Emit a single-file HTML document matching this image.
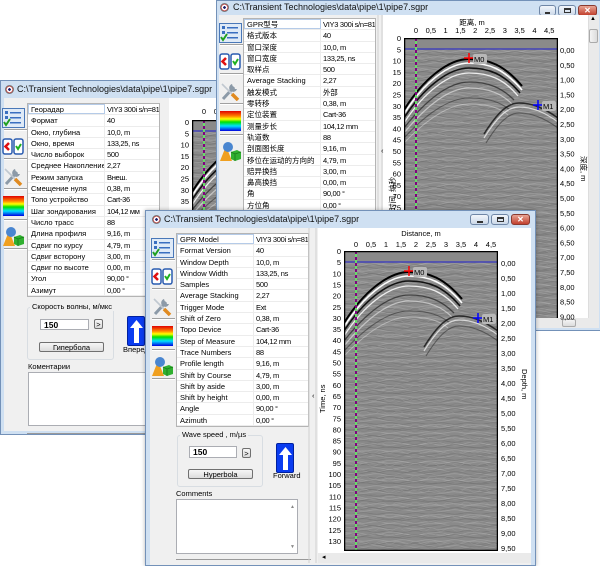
<!DOCTYPE html>
<html><head><meta charset="utf-8">
<style>
*{margin:0;padding:0;box-sizing:border-box}
body{width:600px;height:564px;background:#fff;position:relative;overflow:hidden;font-family:"Liberation Sans","Noto Sans CJK SC",sans-serif;font-size:7.5px;color:#000}
.win{position:absolute;background:#cfe0f2;border:1px solid #7391b8;overflow:hidden}
.cl{position:absolute;background:#f0f0f0}
.wh{position:absolute;background:#fff}
.tt{position:absolute;font-size:9px;white-space:nowrap;color:#111}
.dot{position:absolute;width:9px;height:9px;border-radius:50%;background:radial-gradient(circle,#1a1a6a 0 25%,#fff 30% 55%,#d04040 60%);border:1px solid #777}
.cb{position:absolute;height:11px;border:1px solid #6f86a6;border-radius:3px;background:linear-gradient(#f2f6fb,#cbd8e8)}
.cx{background:linear-gradient(#e8a494,#c2402e);border-color:#8a3a30;color:#fff;font-size:8px;font-weight:bold;text-align:center;line-height:9px}
.tbl{position:absolute;background:#fff;border:1px solid #b4b4b4;width:133px}
.r{height:11.3px;line-height:11px;border-bottom:1px solid #ececec;display:flex;white-space:nowrap;overflow:hidden;font-size:7.5px}
.r span{display:block;padding-left:3px}
.r span:first-child{width:77px;border-right:1px solid #ececec;flex:none;overflow:hidden}
.r span:last-child{letter-spacing:-0.3px;padding-left:2px}
.r.sel span:first-child{outline:1px solid #b5cbe8;outline-offset:-1px}
.ic{position:absolute}
.sep{position:absolute;height:2px;border-top:1px solid #a0a0a0;border-bottom:1px solid #fff}
.gb{position:absolute;border:1px solid #d8dde2;border-radius:3px}
.gl{position:absolute;background:#f0f0f0;padding:0 2px;white-space:nowrap;font-size:7.5px}
.inp{position:absolute;background:#fff;border:1px solid #abadb3;font-weight:bold;font-size:8.5px;padding-left:3px;line-height:11px}
.btn{position:absolute;border:1px solid #707070;border-radius:2px;background:linear-gradient(#f6f6f6,#dcdcdc);text-align:center;font-size:7.5px;line-height:9px}
.fw{position:absolute;background:#0a3cf0;border-radius:2px;border:1px solid #0020a0}
.lab{position:absolute;font-size:7.5px;white-space:nowrap}
.ta{position:absolute;background:#fff;border:1px solid #abadb3}
.sv{position:absolute;left:0;top:0}
svg text{font-family:"Liberation Sans","Noto Sans CJK SC",sans-serif;font-size:7.5px}
</style></head><body>

<svg width="0" height="0" style="position:absolute">
<defs>
<linearGradient id="rb" x1="0" y1="0" x2="0" y2="1">
<stop offset="0" stop-color="#e00000"/><stop offset=".25" stop-color="#ff8000"/><stop offset=".4" stop-color="#ffff00"/><stop offset=".55" stop-color="#00e000"/><stop offset=".75" stop-color="#00e0ff"/><stop offset="1" stop-color="#0000e0"/></linearGradient>
<pattern id="tx" width="26" height="6" patternUnits="userSpaceOnUse">
<path d="M0,1.5 Q6.5,0 13,1.5 T26,1.5" stroke="#a6a6a6" stroke-width=".8" fill="none"/>
<path d="M0,4.5 Q6.5,6 13,4.5 T26,4.5" stroke="#747474" stroke-width=".8" fill="none"/>
</pattern>
<pattern id="tx2" width="41" height="9" patternUnits="userSpaceOnUse">
<path d="M0,3 Q10,1 20,4 T41,3" stroke="#b0b0b0" stroke-width=".7" fill="none"/>
<path d="M0,7 Q10,9 20,6 T41,7" stroke="#6a6a6a" stroke-width=".7" fill="none"/>
</pattern>
<pattern id="tx3" width="17" height="13" patternUnits="userSpaceOnUse">
<path d="M0,5 Q4,3 8,6 T17,5" stroke="#9e9e9e" stroke-width=".7" fill="none"/>
<path d="M0,11 Q4,12 8,10 T17,11" stroke="#7a7a7a" stroke-width=".7" fill="none"/>
</pattern>
<g id="plot">
<rect width="154" height="300" fill="#8a8a8a"/>
<rect y="11" width="154" height="289" fill="url(#tx)" opacity=".8"/>
<rect y="11" width="154" height="289" fill="url(#tx2)" opacity=".5"/>
<rect y="11" width="154" height="289" fill="url(#tx3)" opacity=".5"/>
<g fill="none">
<path d="M0,72 C20,40 45,21 65,21 C85,21 100,27 118,48" stroke="#000" stroke-width="2"/>
<path d="M0,76 C20,44 45,25 65,25 C85,25 100,31 118,52" stroke="#fff" stroke-width="1.6"/>
<path d="M0,80 C20,49 45,30 65,30 C85,30 100,36 116,55" stroke="#111" stroke-width="1.6"/>
<path d="M0,85 C20,54 45,35 65,35 C85,35 100,41 114,58" stroke="#eee" stroke-width="1.3"/>
<path d="M0,90 C22,62 45,44 65,44 C85,44 98,50 110,62" stroke="#222" stroke-width="1.3" opacity=".7"/>
<path d="M0,95 C22,68 45,50 65,50 C85,50 98,56 108,66" stroke="#ddd" stroke-width="1.2" opacity=".7"/>
<path d="M0,100 C22,76 45,60 65,60 C85,60 96,64 106,72" stroke="#222" stroke-width="1.1" opacity=".5"/>
<path d="M0,105 C22,82 45,66 65,66 C85,66 96,70 104,77" stroke="#ddd" stroke-width="1" opacity=".5"/>
<path d="M80,96 C95,72 105,65 115,65 C128,65 140,70 154,80" stroke="#111" stroke-width="1.5" opacity=".8"/>
<path d="M80,100 C95,76 105,69 115,69 C128,69 140,74 154,84" stroke="#eee" stroke-width="1.2" opacity=".8"/>
<path d="M82,105 C96,82 106,75 115,75 C128,75 140,80 154,90" stroke="#222" stroke-width="1.1" opacity=".5"/>
</g>
<line x1="0" y1="11" x2="154" y2="11" stroke="#3434c0" stroke-width="1.2"/>
<line x1="12" y1="0" x2="12" y2="300" stroke="#66e066" stroke-width="2"/>
<line x1="12" y1="0" x2="12" y2="300" stroke="#800080" stroke-width="2" stroke-dasharray="3 3"/>
<rect x="0.5" y="0.5" width="153" height="299" fill="none" stroke="#000" stroke-width="1.5"/>
<path d="M60,20 h10 M65,15 v10" stroke="#f00" stroke-width="1.5"/>
<rect x="69" y="16" width="14" height="10" rx="2" fill="#b8b8b8"/>
<text x="70" y="24">M0</text>
<path d="M129,67 h10 M134,62 v10" stroke="#00f" stroke-width="1.5"/>
<rect x="138" y="63" width="14" height="10" rx="2" fill="#b8b8b8"/>
<text x="139" y="71">M1</text>
</g>
<g id="i1"><rect x=".5" y=".5" width="22" height="19" fill="#dfeaf7" stroke="#4a78b8"/><rect x="3" y="3" width="3" height="3" fill="#3a6fc0"/><rect x="8" y="4" width="11" height="1.5" fill="#3a6fc0"/><rect x="3" y="8" width="3" height="3" fill="#3a6fc0"/><rect x="8" y="9" width="11" height="1.5" fill="#3a6fc0"/><rect x="8" y="14" width="11" height="1.5" fill="#3a6fc0"/><path d="M2,14 L4,17 L8,11" stroke="#20a020" stroke-width="2" fill="none"/></g>
<g id="i2"><rect x="1" y="2" width="9" height="15" rx="2" fill="#fff" stroke="#2a5cb0" stroke-width="1.5"/><path d="M7,6 L3.5,9.5 L7,13" stroke="#e01010" stroke-width="2.5" fill="none"/><rect x="12" y="2" width="9" height="15" rx="2" fill="#fff" stroke="#2a5cb0" stroke-width="1.5"/><path d="M14,9 L16,12 L19,7" stroke="#20b020" stroke-width="2" fill="none"/></g>
<g id="i3"><path d="M4,18 L15,6" stroke="#8c9aa8" stroke-width="3"/><path d="M13,3 a4,4 0 1 0 5,5 l-2,0 -2,-2 z" fill="#8c9aa8"/><path d="M3,3 L13,13" stroke="#c0c8d0" stroke-width="1.6"/><path d="M13,13 L19,19" stroke="#e08a20" stroke-width="3.5"/></g>
<g id="i4"><rect x="1" y="0" width="21" height="20" fill="url(#rb)"/></g>
<g id="i5"><path d="M1,20 L7,5 L13,20 Z" fill="#f0a020"/><circle cx="9" cy="6" r="5" fill="#4a86d0"/><path d="M12,11 L18,9 L22,11 L22,18 L16,20 L12,18 Z" fill="#30b030"/><path d="M12,11 L16,13 L22,11 M16,13 V20" stroke="#1a7a1a" fill="none" stroke-width=".8"/></g>
<g id="fwa"><path d="M8.5,3 L2,11 L6,11 L6,26 L11,26 L11,11 L15,11 Z" fill="#fff"/></g>
</defs></svg>

<!-- ============ WINDOW 1 (Russian) ============ -->
<div class="win" style="left:0;top:80px;width:232px;height:355px">
<div class="dot" style="left:4px;top:4px"></div>
<div class="tt" style="left:16px;top:3px">C:\Transient Technologies\data\pipe\1\pipe7.sgpr</div>
<div class="cl" style="left:3px;top:17px;width:240px;height:333px"></div>
<div class="wh" style="left:168px;top:17px;width:70px;height:333px"></div>
<svg class="ic" style="left:1px;top:27px" width="24" height="20"><use href="#i1"/></svg>
<div class="sep" style="left:3px;top:48px;width:23px"></div>
<svg class="ic" style="left:1px;top:56px" width="24" height="20"><use href="#i2"/></svg>
<div class="sep" style="left:3px;top:77px;width:23px"></div>
<svg class="ic" style="left:1px;top:85px" width="24" height="20"><use href="#i3"/></svg>
<div class="sep" style="left:3px;top:107px;width:23px"></div>
<svg class="ic" style="left:1px;top:115px" width="24" height="20"><use href="#i4"/></svg>
<div class="sep" style="left:3px;top:138px;width:23px"></div>
<svg class="ic" style="left:1px;top:145px" width="24" height="20"><use href="#i5"/></svg>
<div class="sep" style="left:3px;top:167px;width:23px"></div>
<div class="tbl" style="left:26px;top:22px">
<div class="r sel"><span>Георадар</span><span>VIY3 300i s/n=81</span></div>
<div class="r"><span>Формат</span><span>40</span></div>
<div class="r"><span>Окно, глубина</span><span>10,0, m</span></div>
<div class="r"><span>Окно, время</span><span>133,25, ns</span></div>
<div class="r"><span>Число выборок</span><span>500</span></div>
<div class="r"><span>Среднее Накопление</span><span>2,27</span></div>
<div class="r"><span>Режим запуска</span><span>Внеш.</span></div>
<div class="r"><span>Смещение нуля</span><span>0,38, m</span></div>
<div class="r"><span>Топо устройство</span><span>Cart-36</span></div>
<div class="r"><span>Шаг зондирования</span><span>104,12 мм</span></div>
<div class="r"><span>Число трасс</span><span>88</span></div>
<div class="r"><span>Длина профиля</span><span>9,16, m</span></div>
<div class="r"><span>Сдвиг по курсу</span><span>4,79, m</span></div>
<div class="r"><span>Сдвиг всторону</span><span>3,00, m</span></div>
<div class="r"><span>Сдвиг по высоте</span><span>0,00, m</span></div>
<div class="r"><span>Угол</span><span>90,00 °</span></div>
<div class="r"><span>Азимут</span><span>0,00 °</span></div>
</div>
<div class="gb" style="left:26px;top:226px;width:87px;height:53px"></div>
<div class="gl" style="left:29px;top:221px">Скорость волны, м/мкс</div>
<div class="inp" style="left:39px;top:238px;width:49px;height:11px">150</div>
<div class="btn" style="left:93px;top:238px;width:9px;height:10px">&gt;</div>
<div class="btn" style="left:38px;top:261px;width:65px;height:10px">Гипербола</div>
<div class="fw" style="left:126px;top:235px;width:18px;height:30px"><svg width="18" height="30"><use href="#fwa"/></svg></div>
<div class="lab" style="left:122px;top:264px">Вперед</div>
<div class="lab" style="left:27px;top:281px">Коментарии</div>
<div class="ta" style="left:27px;top:291px;width:121px;height:54px"></div>
<div style="position:absolute;left:26px;top:352px;width:130px;border-top:1px solid #999"></div>
<svg class="sv" width="232" height="355">
<svg x="191" y="39" width="154" height="250"><use href="#plot"/></svg>
<g text-anchor="end">
<text x="188" y="44">0</text><text x="188" y="55.3">5</text><text x="188" y="66.6">10</text><text x="188" y="77.9">15</text><text x="188" y="89.2">20</text><text x="188" y="100.5">25</text><text x="188" y="111.8">30</text><text x="188" y="123.1">35</text><text x="188" y="134.4">40</text>
</g>
<g text-anchor="middle"><text x="203" y="33">0</text><text x="218" y="33">0,5</text></g>
</svg>
</div>

<!-- ============ WINDOW 3 (Chinese) ============ -->
<div class="win" style="left:216px;top:0;width:385px;height:331px">
<div class="dot" style="left:3px;top:2px"></div>
<div class="tt" style="left:16px;top:1px">C:\Transient Technologies\data\pipe\1\pipe7.sgpr</div>
<div class="cb" style="left:322px;top:4px;width:17px"><div style="margin:6px 5px 0;height:2px;background:#333;width:5px"></div></div>
<div class="cb" style="left:341px;top:4px;width:18px"><div style="margin:2px 5px 0;height:5px;border:1px solid #333;border-top-width:2px;width:7px"></div></div>
<div class="cb cx" style="left:361px;top:4px;width:19px">✕</div>
<div class="cl" style="left:2px;top:14px;width:380px;height:313px"></div>
<div class="wh" style="left:166px;top:14px;width:205px;height:303px"></div>
<div style="position:absolute;left:371px;top:14px;width:11px;height:303px;background:#eaeaea;border-left:1px solid #ddd"></div>
<div style="position:absolute;left:372px;top:28px;width:9px;height:14px;background:linear-gradient(90deg,#f4f4f4,#dcdcdc);border:1px solid #aaa;border-radius:2px"></div>
<div class="lab" style="left:373px;top:15px;font-size:6px">▲</div>
<div style="position:absolute;left:166px;top:317px;width:216px;height:10px;background:#eaeaea"></div>
<div style="position:absolute;left:345px;top:318px;width:14px;height:8px;background:linear-gradient(#f4f4f4,#dcdcdc);border:1px solid #aaa;border-radius:2px"></div>
<svg class="ic" style="left:2px;top:22px" width="24" height="20"><use href="#i1"/></svg>
<div class="sep" style="left:3px;top:43px;width:23px"></div>
<svg class="ic" style="left:2px;top:51px" width="24" height="20"><use href="#i2"/></svg>
<div class="sep" style="left:3px;top:72px;width:23px"></div>
<svg class="ic" style="left:2px;top:80px" width="24" height="20"><use href="#i3"/></svg>
<div class="sep" style="left:3px;top:102px;width:23px"></div>
<svg class="ic" style="left:2px;top:110px" width="24" height="20"><use href="#i4"/></svg>
<div class="sep" style="left:3px;top:133px;width:23px"></div>
<svg class="ic" style="left:2px;top:140px" width="24" height="20"><use href="#i5"/></svg>
<div class="tbl" style="left:26px;top:17px">
<div class="r sel"><span>GPR型号</span><span>VIY3 300i s/n=81</span></div>
<div class="r"><span>格式版本</span><span>40</span></div>
<div class="r"><span>窗口深度</span><span>10,0, m</span></div>
<div class="r"><span>窗口宽度</span><span>133,25, ns</span></div>
<div class="r"><span>取样点</span><span>500</span></div>
<div class="r"><span>Average Stacking</span><span>2,27</span></div>
<div class="r"><span>触发模式</span><span>外部</span></div>
<div class="r"><span>零转移</span><span>0,38, m</span></div>
<div class="r"><span>定位装置</span><span>Cart-36</span></div>
<div class="r"><span>测量步长</span><span>104,12 mm</span></div>
<div class="r"><span>轨道数</span><span>88</span></div>
<div class="r"><span>剖面图长度</span><span>9,16, m</span></div>
<div class="r"><span>移位在运动的方向的</span><span>4,79, m</span></div>
<div class="r"><span>赔异换挡</span><span>3,00, m</span></div>
<div class="r"><span>鼻高换挡</span><span>0,00, m</span></div>
<div class="r"><span>角</span><span>90,00 °</span></div>
<div class="r"><span>方位角</span><span>0,00 °</span></div>
</div>
<svg class="sv" width="385" height="331">
<line x1="161" y1="14" x2="161" y2="317" stroke="#cfcfcf"/><line x1="165" y1="14" x2="165" y2="317" stroke="#cfcfcf"/>
<svg x="187" y="37" width="154" height="280"><use href="#plot"/></svg>
<text x="255" y="24" text-anchor="middle">距离, m</text>
<g text-anchor="middle">
<text x="199" y="32">0</text><text x="213.8" y="32">0,5</text><text x="228.6" y="32">1</text><text x="243.4" y="32">1,5</text><text x="258.2" y="32">2</text><text x="273" y="32">2,5</text><text x="287.8" y="32">3</text><text x="302.6" y="32">3,5</text><text x="317.4" y="32">4</text><text x="332.2" y="32">4,5</text>
</g>
<g text-anchor="end">
<text x="184" y="40">0</text><text x="184" y="51.3">5</text><text x="184" y="62.6">10</text><text x="184" y="73.9">15</text><text x="184" y="85.2">20</text><text x="184" y="96.5">25</text><text x="184" y="107.8">30</text><text x="184" y="119.1">35</text><text x="184" y="130.4">40</text><text x="184" y="141.7">45</text><text x="184" y="153">50</text><text x="184" y="164.3">55</text><text x="184" y="175.6">60</text><text x="184" y="186.9">65</text><text x="184" y="198.2">70</text><text x="184" y="209.5">75</text>
</g>
<g>
<text x="343" y="52">0,00</text><text x="343" y="66.8">0,50</text><text x="343" y="81.6">1,00</text><text x="343" y="96.4">1,50</text><text x="343" y="111.2">2,00</text><text x="343" y="126">2,50</text><text x="343" y="140.8">3,00</text><text x="343" y="155.6">3,50</text><text x="343" y="170.4">4,00</text><text x="343" y="185.2">4,50</text><text x="343" y="200">5,00</text><text x="343" y="214.8">5,50</text><text x="343" y="229.6">6,00</text><text x="343" y="244.4">6,50</text><text x="343" y="259.2">7,00</text><text x="343" y="274">7,50</text><text x="343" y="288.8">8,00</text><text x="343" y="303.6">8,50</text><text x="343" y="318.4">9,00</text>
</g>
<text transform="translate(178,210) rotate(-90)">时间, 纳秒</text>
<text transform="translate(364,155) rotate(90)">深度, m</text>
<text x="164" y="152" font-size="7">‹</text>
</svg>
</div>

<!-- ============ WINDOW 2 (English) ============ -->
<div class="win" style="left:145px;top:210px;width:391px;height:356px;box-shadow:0 0 4px rgba(0,0,0,.3)">
<div class="dot" style="left:6px;top:4px"></div>
<div class="tt" style="left:18px;top:3px">C:\Transient Technologies\data\pipe\1\pipe7.sgpr</div>
<div class="cb" style="left:324px;top:3px;width:19px"><div style="margin:6px 6px 0;height:2px;background:#333;width:6px"></div></div>
<div class="cb" style="left:345px;top:3px;width:18px"><div style="margin:2px 5px 0;height:5px;border:1px solid #333;border-top-width:2px;width:7px"></div></div>
<div class="cb cx" style="left:365px;top:3px;width:19px">✕</div>
<div class="cl" style="left:4px;top:17px;width:381px;height:338px"></div>
<div class="wh" style="left:172px;top:17px;width:213px;height:325px"></div>
<div style="position:absolute;left:172px;top:342px;width:213px;height:10px;background:#eaeaea"></div>
<div class="lab" style="left:176px;top:342px;font-size:7px">◂</div>
<svg class="ic" style="left:5px;top:27px" width="24" height="20"><use href="#i1"/></svg>
<div class="sep" style="left:6px;top:48px;width:23px"></div>
<svg class="ic" style="left:5px;top:56px" width="24" height="20"><use href="#i2"/></svg>
<div class="sep" style="left:6px;top:77px;width:23px"></div>
<svg class="ic" style="left:5px;top:85px" width="24" height="20"><use href="#i3"/></svg>
<div class="sep" style="left:6px;top:107px;width:23px"></div>
<svg class="ic" style="left:5px;top:115px" width="24" height="20"><use href="#i4"/></svg>
<div class="sep" style="left:6px;top:138px;width:23px"></div>
<svg class="ic" style="left:5px;top:145px" width="24" height="20"><use href="#i5"/></svg>
<div class="sep" style="left:6px;top:167px;width:23px"></div>
<div class="tbl" style="left:30px;top:22px">
<div class="r sel"><span>GPR Model</span><span>VIY3 300i s/n=81</span></div>
<div class="r"><span>Format Version</span><span>40</span></div>
<div class="r"><span>Window Depth</span><span>10,0, m</span></div>
<div class="r"><span>Window Width</span><span>133,25, ns</span></div>
<div class="r"><span>Samples</span><span>500</span></div>
<div class="r"><span>Average Stacking</span><span>2,27</span></div>
<div class="r"><span>Trigger Mode</span><span>Ext</span></div>
<div class="r"><span>Shift of Zero</span><span>0,38, m</span></div>
<div class="r"><span>Topo Device</span><span>Cart-36</span></div>
<div class="r"><span>Step of Measure</span><span>104,12 mm</span></div>
<div class="r"><span>Trace Numbers</span><span>88</span></div>
<div class="r"><span>Profile length</span><span>9,16, m</span></div>
<div class="r"><span>Shift by Course</span><span>4,79, m</span></div>
<div class="r"><span>Shift by aside</span><span>3,00, m</span></div>
<div class="r"><span>Shift by height</span><span>0,00, m</span></div>
<div class="r"><span>Angle</span><span>90,00 °</span></div>
<div class="r"><span>Azimuth</span><span>0,00 °</span></div>
</div>
<div class="gb" style="left:31px;top:224px;width:86px;height:52px"></div>
<div class="gl" style="left:34px;top:219px">Wave speed , m/µs</div>
<div class="inp" style="left:43px;top:235px;width:48px;height:12px">150</div>
<div class="btn" style="left:96px;top:237px;width:9px;height:10px">&gt;</div>
<div class="btn" style="left:42px;top:258px;width:65px;height:10px">Hyperbola</div>
<div class="fw" style="left:130px;top:232px;width:18px;height:30px"><svg width="18" height="30"><use href="#fwa"/></svg></div>
<div class="lab" style="left:127px;top:260px">Forward</div>
<div class="lab" style="left:30px;top:278px">Comments</div>
<div class="ta" style="left:30px;top:288px;width:122px;height:55px"><div class="lab" style="right:2px;top:4px;font-size:5px;color:#888">▲</div><div class="lab" style="right:2px;bottom:3px;font-size:5px;color:#888">▼</div></div>
<div style="position:absolute;left:30px;top:348px;width:135px;border-top:1px solid #999"></div>
<svg class="sv" width="391" height="356">
<line x1="163" y1="17" x2="163" y2="352" stroke="#cfcfcf"/><line x1="170" y1="17" x2="170" y2="352" stroke="#cfcfcf"/>
<text x="166" y="187" font-size="7">‹</text>
<svg x="198" y="40" width="154" height="300"><use href="#plot"/></svg>
<text x="275" y="25" text-anchor="middle">Distance, m</text>
<g text-anchor="middle">
<text x="210" y="36">0</text><text x="225" y="36">0,5</text><text x="240" y="36">1</text><text x="255" y="36">1,5</text><text x="270" y="36">2</text><text x="285" y="36">2,5</text><text x="300" y="36">3</text><text x="315" y="36">3,5</text><text x="330" y="36">4</text><text x="345" y="36">4,5</text>
</g>
<g text-anchor="end">
<text x="195" y="43">0</text><text x="195" y="54.15">5</text><text x="195" y="65.3">10</text><text x="195" y="76.45">15</text><text x="195" y="87.6">20</text><text x="195" y="98.75">25</text><text x="195" y="109.9">30</text><text x="195" y="121.05">35</text><text x="195" y="132.2">40</text><text x="195" y="143.35">45</text><text x="195" y="154.5">50</text><text x="195" y="165.65">55</text><text x="195" y="176.8">60</text><text x="195" y="187.95">65</text><text x="195" y="199.1">70</text><text x="195" y="210.25">75</text><text x="195" y="221.4">80</text><text x="195" y="232.55">85</text><text x="195" y="243.7">90</text><text x="195" y="254.85">95</text><text x="195" y="266">100</text><text x="195" y="277.15">105</text><text x="195" y="288.3">110</text><text x="195" y="299.45">115</text><text x="195" y="310.6">120</text><text x="195" y="321.75">125</text><text x="195" y="332.9">130</text>
</g>
<g>
<text x="355" y="55">0,00</text><text x="355" y="70">0,50</text><text x="355" y="85">1,00</text><text x="355" y="100">1,50</text><text x="355" y="115">2,00</text><text x="355" y="130">2,50</text><text x="355" y="145">3,00</text><text x="355" y="160">3,50</text><text x="355" y="175">4,00</text><text x="355" y="190">4,50</text><text x="355" y="205">5,00</text><text x="355" y="220">5,50</text><text x="355" y="235">6,00</text><text x="355" y="250">6,50</text><text x="355" y="265">7,00</text><text x="355" y="280">7,50</text><text x="355" y="295">8,00</text><text x="355" y="310">8,50</text><text x="355" y="325">9,00</text><text x="355" y="340">9,50</text>
</g>
<text transform="translate(179,202) rotate(-90)">Time, ns</text>
<text transform="translate(376,158) rotate(90)">Depth, m</text>
</svg>
</div>

</body></html>
